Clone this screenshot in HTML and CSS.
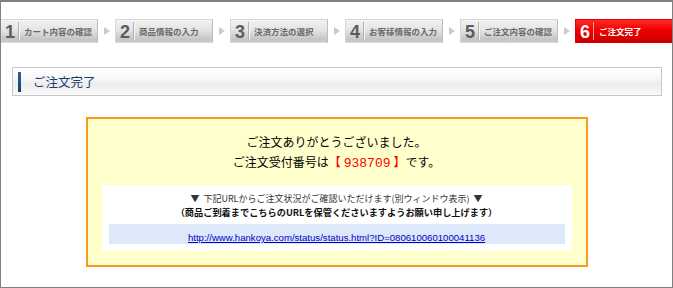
FILE: index.html
```html
<!DOCTYPE html>
<html lang="ja">
<head>
    <meta charset="UTF-8">
    <meta name="viewport" content="width=device-width, initial-scale=1.0">
    <title>ご注文完了</title>
    <link rel="stylesheet" href="styles.css">
</head>
<body>
    <div class="page">
        <ol class="steps">
            <li class="step"><span class="num">1</span><span class="label">カート内容の確認</span></li>
            <li class="arrow"></li>
            <li class="step"><span class="num">2</span><span class="label">商品情報の入力</span></li>
            <li class="arrow"></li>
            <li class="step"><span class="num">3</span><span class="label">決済方法の選択</span></li>
            <li class="arrow"></li>
            <li class="step"><span class="num">4</span><span class="label">お客様情報の入力</span></li>
            <li class="arrow"></li>
            <li class="step"><span class="num">5</span><span class="label">ご注文内容の確認</span></li>
            <li class="arrow"></li>
            <li class="step current"><span class="num">6</span><span class="label">ご注文完了</span></li>
        </ol>

        <h2 class="title">ご注文完了</h2>

        <div class="notice">
            <p class="thanks">ご注文ありがとうございました。</p>
            <p class="thanks">ご注文受付番号は<span class="order-no">【<span class="digits">938709</span>】</span>です。</p>
            <div class="status">
                <p>▼&nbsp; 下記URLからご注文状況がご確認いただけます(別ウィンドウ表示)&nbsp; ▼</p>
                <p class="keep">（商品ご到着までこちらのURLを保管くださいますようお願い申し上げます）</p>
                <div class="url">
                    <a href="#" target="_blank">http://www.hankoya.com/status/status.html?ID=080610060100041136</a>
                </div>
            </div>
        </div>
    </div>
</body>
</html>
```

FILE: styles.css
```css
body { margin: 0; font-family: "Noto Sans CJK JP", "Liberation Sans", sans-serif; background: #fff; }
.page { height: 288px; box-sizing: border-box; border: 1px solid #808080; border-top-width: 2px; padding-top: 17px; overflow: hidden; }

/* step bar */
.steps { display: flex; margin: 0 -1px; padding: 0; list-style: none; height: 24px; }
.step { width: 98px; flex: none; box-sizing: border-box; display: flex; align-items: center; padding-left: 1px;
    border: 1px solid #d6d6d6; border-right-color: #bdbdbd;
    background: linear-gradient(#f2f2f2, #e4e4e4 45%, #d2d2d2 70%, #c4c4c4 90%, #d0d0d0); }
.step .num { width: 16px; height: 18px; line-height: 18px; text-align: center; font: bold 18px "Liberation Sans", sans-serif; color: #5c5c5c;
    border-right: 1px solid #b0b0b0; box-shadow: 1px 0 0 #f6f6f6; }
.step .label { margin-left: 5px; font-size: 8.5px; font-weight: bold; color: #6a6a6a; white-space: nowrap; }
.step.current { border-color: #e00000; background: linear-gradient(#ff2a2a, #f00000 45%, #dd0000 75%, #c80000); }
.step.current .num { color: #fff; border-right-color: #ff9a9a; box-shadow: none; }
.step.current .label { color: #fff; }
.arrow { width: 17px; flex: none; display: flex; align-items: center; justify-content: center; }
.arrow::after { content: ""; border-left: 6px solid #cbcbcb; border-top: 4px solid transparent; border-bottom: 4px solid transparent; }

/* page title */
.title { margin: 24px 10px 0 11px; height: 29px; box-sizing: border-box; display: flex; align-items: center; padding-left: 5px;
    border: 1px solid #c8c8c8; background: linear-gradient(#fff, #f7f7f7 40%, #ececec 60%, #fafafa);
    font-size: 12.5px; font-weight: normal; color: #1b3c70; }
.title::before { content: ""; width: 3px; height: 20px; margin-right: 12px; background: linear-gradient(#2f5f9f, #163d74); }

/* completion notice */
.notice { width: 502px; margin: 21px auto 0; box-sizing: border-box; border: 2px solid #f99a1f; background: #ffffcc;
    padding: 13px 14px 14px; text-align: center; }
.thanks { margin: 0; font-size: 12px; line-height: 20px; color: #000; }
.order-no { color: #f00; }
.order-no .digits { margin: 0 3px; font-family: "Liberation Mono", monospace; font-size: 13px; }

.status { margin-top: 11px; padding: 7px; background: #fff; }
.status p { margin: 0; font-size: 9px; line-height: 13.5px; color: #333; }
.status .keep { font-size: 9.2px; font-weight: bold; color: #111; }
.url { margin-top: 5px; height: 20px; line-height: 20px; background: #dde8fb; }
.url a { font: 9.6px "Liberation Sans", sans-serif; color: #0000cc; }
```
